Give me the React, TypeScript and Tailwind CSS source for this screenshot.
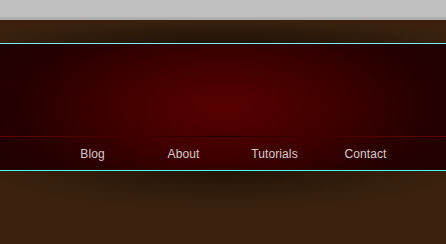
import React from 'react';

const links = ['Blog', 'About', 'Tutorials', 'Contact'];

// Cabeçalho escuro com menu de navegação
export default function App() {
  return (
    <div className="w-[446px] h-[244px] overflow-hidden bg-[#3c220e] font-['Liberation_Sans',Arial,sans-serif]">
      {/* barra cinza do topo */}
      <div className="h-[17px] bg-[#c0c0c0]" />
      <div className="h-[3px] bg-gradient-to-b from-[#b4b4b4] to-[#a8a8a8]" />

      {/* faixa marrom com sombra */}
      <div className="h-[23px] bg-[radial-gradient(ellipse_60%_100%_at_50%_100%,#1f1409_0%,#2b190b_45%,#3c220e_100%)]" />

      <div className="h-px bg-[#77f0ee]" />

      {/* cabeçalho + menu */}
      <div className="bg-[radial-gradient(ellipse_65%_100%_at_50%_50%,#580000_0%,#420000_35%,#260000_70%,#1c0000_100%)]">
        <div className="h-[92px]" />
        <div className="h-px bg-[linear-gradient(to_right,#6a0000,#3a0000_35%,#1a0000_50%,#3a0000_65%,#6a0000)]" />
        <nav className="h-[33px] flex items-center pl-[47px]">
          {links.map((l) => (
            <a
              key={l}
              className="w-[91px] text-center text-[12px] text-[#d8cccc] tracking-[0.1px]"
            >
              {l}
            </a>
          ))}
        </nav>
      </div>

      <div className="h-px bg-[#4ff5f2]" />

      {/* sombra abaixo do menu */}
      <div className="h-[40px] bg-[radial-gradient(ellipse_55%_100%_at_50%_0%,#1f1409_0%,#2d1a0b_40%,#3c220e_100%)]" />
    </div>
  );
}
